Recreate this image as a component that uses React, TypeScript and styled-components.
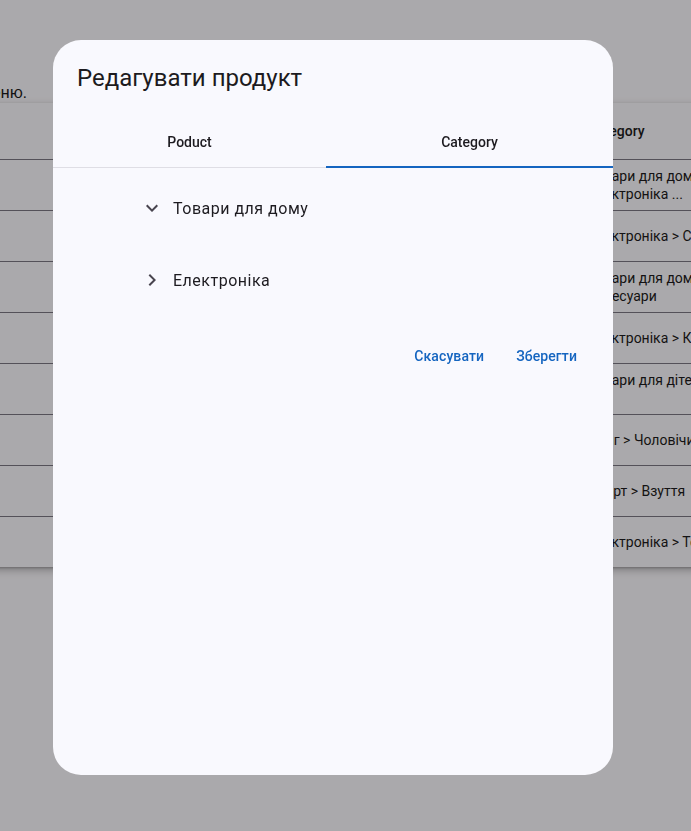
import React from "react";
import styled, { createGlobalStyle } from "styled-components";

const GlobalStyle = createGlobalStyle`
  html, body {
    margin: 0;
    padding: 0;
    background: #fdfbff;
    overflow: hidden;
    font-family: Roboto, "Noto Sans", sans-serif;
  }
  #root { width: 691px; height: 831px; overflow: hidden; }
`;

/* ---------- underlying page ---------- */
const Page = styled.div`
  display: flex;
  flex-direction: column;
  padding-top: 82px;
  color: #1d1b20;
`;

const Intro = styled.div`
  display: flex;
  justify-content: flex-end;
  width: 27px;
  white-space: nowrap;
  font-size: 16px;
  line-height: 21px;
`;

const TableCard = styled.div`
  margin: 0 -40px;
  background: #fdfbff;
  box-shadow: 0 3px 8px rgba(0, 0, 0, 0.28), 0 1px 2px rgba(0, 0, 0, 0.2);
  display: grid;
  grid-template-columns: 612px 1fr;
`;

const HeadCell = styled.div<{ $inset?: boolean }>`
  height: 56px;
  display: flex;
  align-items: center;
  padding: 0 16px 0 ${(p) => (p.$inset ? "160px" : "16px")};
  font-size: 14px;
  font-weight: 500;
  border-bottom: 1px solid #7d7984;
  white-space: nowrap;
`;

const Cell = styled.div<{ $last?: boolean; $inset?: boolean }>`
  height: 50px;
  display: flex;
  align-items: center;
  padding: 0 16px 0 ${(p) => (p.$inset ? "160px" : "16px")};
  font-size: 14px;
  line-height: 18px;
  white-space: nowrap;
  border-bottom: ${(p) => (p.$last ? "none" : "1px solid #7d7984")};
`;

/* ---------- dialog ---------- */
const Scrim = styled.div`
  position: fixed;
  inset: 0;
  background: rgba(0, 0, 0, 0.325);
`;

const Dialog = styled.div`
  position: absolute;
  left: 53px;
  top: 40px;
  width: 560px;
  height: 735px;
  border-radius: 28px;
  background: #f9f9fe;
  display: flex;
  flex-direction: column;
  color: #1d1b20;
`;

const Title = styled.h2`
  margin: 0;
  padding: 22px 24px 0;
  font-size: 24px;
  line-height: 32px;
  font-weight: 400;
`;

const TabList = styled.div`
  margin-top: 25px;
  display: grid;
  grid-template-columns: 273px 1fr;
  border-bottom: 1px solid #dfdee5;
`;

const Tab = styled.div<{ $active?: boolean }>`
  position: relative;
  height: 48px;
  display: flex;
  align-items: center;
  justify-content: center;
  padding-bottom: 2px;
  box-sizing: border-box;
  font-size: 14px;
  font-weight: 500;
  color: #1d1b20;
  &::after {
    content: "";
    position: absolute;
    left: 0;
    right: 0;
    bottom: -1px;
    height: 2px;
    background: ${(p) => (p.$active ? "#1565c0" : "transparent")};
  }
`;

const Tree = styled.div`
  display: flex;
  flex-direction: column;
  gap: 24px;
  padding: 16px 0 0 87px;
`;

const TreeItem = styled.div`
  height: 48px;
  display: flex;
  align-items: center;
  gap: 9px;
  font-size: 16px;
  color: #1d1b20;
  letter-spacing: 0.5px;
`;

const Icon = styled.svg`
  width: 24px;
  height: 24px;
  fill: #49454f;
  flex: none;
`;

const Actions = styled.div`
  display: flex;
  justify-content: flex-end;
  gap: 8px;
  margin-top: 32px;
  padding-right: 24px;
`;

const TextButton = styled.button`
  height: 40px;
  padding: 0 12px;
  border: none;
  background: transparent;
  font-family: Roboto, sans-serif;
  font-size: 14px;
  font-weight: 500;
  letter-spacing: 0.1px;
  color: #1565c0;
  cursor: pointer;
`;

const rows: [string, string?][] = [
  ["Товари для дому > Кухня,", "Електроніка ..."],
  ["Електроніка > Смартфони"],
  ["Товари для дому > ", "Аксесуари"],
  ["Електроніка > Комп'ютери"],
  ["Товари для дітей > Іграшки", "\u00a0"],
  ["Одяг > Чоловічий одяг"],
  ["Спорт > Взуття"],
  ["Електроніка > Телевізори"],
];

export default function App() {
  return (
    <>
      <GlobalStyle />
      <Page>
        <Intro>
          <span>Оберіть категорію в меню.</span>
        </Intro>
        <TableCard>
          <HeadCell $inset>Name</HeadCell>
          <HeadCell>Category</HeadCell>
          {rows.map(([a, b], i) => (
            <React.Fragment key={i}>
              <Cell $inset $last={i === rows.length - 1}>
                Товар {i + 1}
              </Cell>
              <Cell $last={i === rows.length - 1}>
                <span>
                  {a}
                  {b && (
                    <>
                      <br />
                      {b}
                    </>
                  )}
                </span>
              </Cell>
            </React.Fragment>
          ))}
        </TableCard>
      </Page>
      <Scrim>
        <Dialog role="dialog">
          <Title>Редагувати продукт</Title>
          <TabList>
            <Tab>Poduct</Tab>
            <Tab $active>Category</Tab>
          </TabList>
          <Tree>
            <TreeItem>
              <Icon viewBox="0 0 24 24">
                <path d="M16.59 8.59 12 13.17 7.41 8.59 6 10l6 6 6-6z" />
              </Icon>
              Товари для дому
            </TreeItem>
            <TreeItem>
              <Icon viewBox="0 0 24 24">
                <path d="M10 6 8.59 7.41 13.17 12l-4.58 4.59L10 18l6-6z" />
              </Icon>
              Електроніка
            </TreeItem>
          </Tree>
          <Actions>
            <TextButton>Скасувати</TextButton>
            <TextButton>Зберегти</TextButton>
          </Actions>
        </Dialog>
      </Scrim>
    </>
  );
}
